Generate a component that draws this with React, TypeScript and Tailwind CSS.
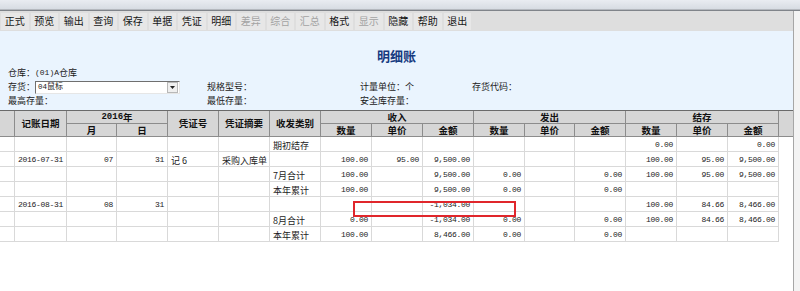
import React from 'react';

const toolbarItems = [
  { name: '正式', disabled: false },
  { name: '预览', disabled: false },
  { name: '输出', disabled: false },
  { name: '查询', disabled: false },
  { name: '保存', disabled: false },
  { name: '单据', disabled: false },
  { name: '凭证', disabled: false },
  { name: '明细', disabled: false },
  { name: '差异', disabled: true },
  { name: '综合', disabled: true },
  { name: '汇总', disabled: true },
  { name: '格式', disabled: false },
  { name: '显示', disabled: true },
  { name: '隐藏', disabled: false },
  { name: '帮助', disabled: false },
  { name: '退出', disabled: false },
];

// one entry per body column: 0 = narrow marker column
const rows: string[][] = [
  ['', '', '', '', '', '', '期初结存', '', '', '', '', '', '', '0.00', '', '0.00'],
  ['', '2016-07-31', '07', '31', '记 6', '采购入库单', '', '100.00', '95.00', '9,500.00', '', '', '', '100.00', '95.00', '9,500.00'],
  ['', '', '', '', '', '', '7月合计', '100.00', '', '9,500.00', '0.00', '', '0.00', '100.00', '95.00', '9,500.00'],
  ['', '', '', '', '', '', '本年累计', '100.00', '', '9,500.00', '0.00', '', '0.00', '', '', ''],
  ['', '2016-08-31', '08', '31', '', '', '', '', '', '-1,034.00', '', '', '', '100.00', '84.66', '8,466.00'],
  ['', '', '', '', '', '', '8月合计', '0.00', '', '-1,034.00', '0.00', '', '0.00', '100.00', '84.66', '8,466.00'],
  ['', '', '', '', '', '', '本年累计', '100.00', '', '8,466.00', '0.00', '', '0.00', '', '', ''],
];

const cjk = "font-['Noto_Sans_CJK_SC',sans-serif]";
const mono = "font-['Liberation_Mono','Noto_Sans_CJK_SC',monospace]";

const HeadCell: React.FC<{ className?: string; children?: React.ReactNode }> = ({ className = '', children }) => (
  <div
    className={`flex items-center justify-center overflow-hidden border-r border-b border-[#8c8c8c] bg-[#d6d6d6] text-[9.5px] leading-[11px] font-bold text-[#111] ${className}`}
  >
    {children}
  </div>
);

export default function App() {
  return (
    <div className={`relative w-[800px] h-[291px] overflow-hidden bg-white ${cjk}`}>
      {/* window chrome */}
      <div className="h-[9px] bg-gradient-to-b from-[#e9ecf1] to-[#d7dce3]" />
      <div className="h-px bg-[#b4b8be]" />
      <div className="h-px bg-[#80848a]" />

      <div className="flex h-[280px]">
        <div className="w-[793px] flex flex-col">
          {/* toolbar */}
          <div className="h-[20px] bg-[#dedede] flex items-center gap-[2px] pl-px">
            {toolbarItems.map((item) => (
              <div
                key={item.name}
                className={`w-[27.5px] h-[17px] flex items-center justify-center bg-[#e7e7e7] text-[10px] leading-none ${
                  item.disabled ? 'text-[#a3a3a3]' : 'text-[#161616]'
                }`}
              >
                {item.name}
              </div>
            ))}
          </div>

          {/* info panel */}
          <div className="h-[79px] bg-[#eaf4fe] pt-[17px] text-[9px] text-[#1a1a1a]">
            <div className="h-[16px] flex items-center justify-center text-[13px] font-bold text-[#163a80]">明细账</div>
            <div className="mt-[2px] h-[14px] flex items-center pl-[8px]">
              <span>仓库：</span>
              <span className={`${mono} text-[8px]`}>(01)A</span>
              <span>仓库</span>
            </div>
            <div className="h-[14px] flex items-center pl-[8px]">
              <div className="w-[199px] flex items-center">
                <span>存货：</span>
                <div className="w-[145px] h-[13px] flex items-center bg-white border border-t-[#6f6f6f] border-l-[#6f6f6f] border-b-[#e6e6e6] border-r-[#e6e6e6]">
                  <span className="flex-1 pl-[2px] text-[8px] leading-none">
                    <span className={`${mono} text-[7.5px]`}>04</span>鼠标
                  </span>
                  <div className="w-[11px] h-[11px] mr-px bg-[#efefef] border border-[#b8b8b8] flex items-center justify-center">
                    <svg width="5" height="3" viewBox="0 0 5 3">
                      <path d="M0 0h5L2.5 3z" fill="#222" />
                    </svg>
                  </div>
                </div>
              </div>
              <div className="w-[153px]">规格型号：</div>
              <div className="w-[112px]">计量单位：个</div>
              <div>存货代码：</div>
            </div>
            <div className="h-[14px] flex items-center pl-[8px]">
              <div className="w-[199px]">最高存量：</div>
              <div className="w-[153px]">最低存量：</div>
              <div>安全库存量：</div>
            </div>
          </div>

          {/* table header */}
          <div className="grid grid-cols-[15px_52px_50px_51px_51px_51px_51px_51px_51px_51px_51px_50px_51px_51px_51px_51px_14px] grid-rows-[13px_13px] border-t border-[#6a6a6a]">
            <HeadCell className="row-span-2" />
            <HeadCell className="row-span-2">记账日期</HeadCell>
            <HeadCell className="col-span-2">
              <span className={`${mono} text-[9px]`}>2016</span>年
            </HeadCell>
            <HeadCell className="row-span-2">凭证号</HeadCell>
            <HeadCell className="row-span-2">凭证摘要</HeadCell>
            <HeadCell className="row-span-2">收发类别</HeadCell>
            <HeadCell className="col-span-3">收入</HeadCell>
            <HeadCell className="col-span-3">发出</HeadCell>
            <HeadCell className="col-span-3">结存</HeadCell>
            <HeadCell className="row-span-2 border-r-0" />
            <HeadCell>月</HeadCell>
            <HeadCell>日</HeadCell>
            <HeadCell>数量</HeadCell>
            <HeadCell>单价</HeadCell>
            <HeadCell>金额</HeadCell>
            <HeadCell>数量</HeadCell>
            <HeadCell>单价</HeadCell>
            <HeadCell>金额</HeadCell>
            <HeadCell>数量</HeadCell>
            <HeadCell>单价</HeadCell>
            <HeadCell>金额</HeadCell>
          </div>

          {/* table body */}
          <div className="grid grid-cols-[15px_52px_50px_51px_51px_51px_51px_51px_51px_51px_51px_50px_51px_51px_51px_51px] auto-rows-[15px] w-[779px]">
            {rows.map((row, r) =>
              row.map((val, c) => {
                const isText = c >= 4 && c <= 6;
                const left = c === 1 || isText;
                return (
                  <div
                    key={`${r}-${c}`}
                    className={`flex items-center pt-[2px] border-r border-b border-[#d9d9d9] text-[#1c1c1c] leading-none whitespace-nowrap ${
                      left ? 'justify-start pl-[3px]' : 'justify-end pr-[3px]'
                    } ${isText ? 'text-[9px]' : `${mono} text-[8px] tracking-[-0.3px]`}`}
                  >
                    {val}
                  </div>
                );
              })
            )}
          </div>
          <div className="flex-1 bg-white" />
        </div>

        {/* right edge */}
        <div className="w-[7px] border-l border-[#a6a6a6] bg-[#f3f3f3]" />
      </div>

      {/* highlight box */}
      <div className="absolute left-[353px] top-[201px] w-[163px] h-[16px] border-2 border-[#e0262b]" />
    </div>
  );
}
